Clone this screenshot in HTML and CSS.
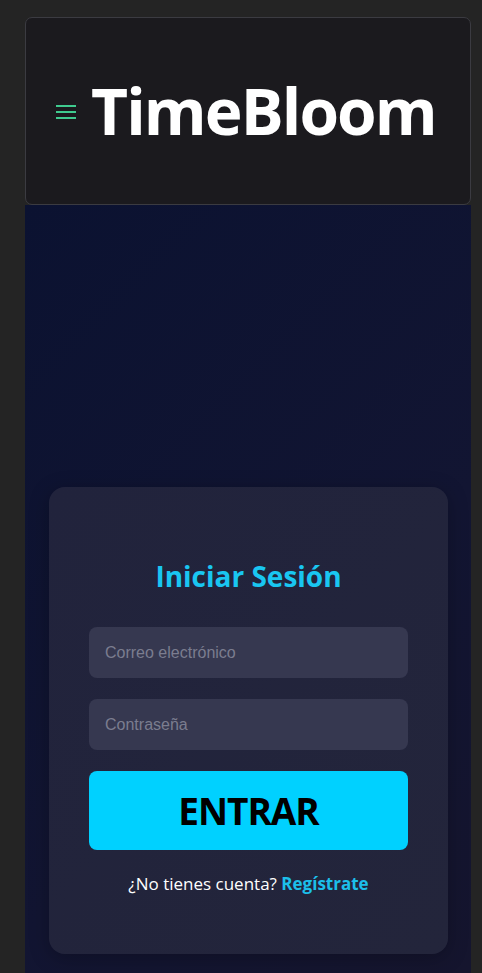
FILE: index.html
```html
<!DOCTYPE html>
<html lang="es">
<head>
<meta charset="utf-8">
<title>TimeBloom</title>
<link rel="stylesheet" href="styles.css">
</head>
<body>
<div class="app">
  <header class="topbar">
    <button class="menu-btn" aria-label="Menú">
      <svg width="20" height="14" viewBox="0 0 20 14"><rect x="0" y="0" width="20" height="2" fill="#3fcb8f"/><rect x="0" y="6" width="20" height="2" fill="#3fcb8f"/><rect x="0" y="12" width="20" height="2" fill="#3fcb8f"/></svg>
    </button>
    <h1 class="brand">TimeBloom</h1>
  </header>
  <main class="main">
    <section class="login-card">
      <h2 class="login-title">Iniciar Sesión</h2>
      <form class="login-form">
        <input class="field" type="email" placeholder="Correo electrónico">
        <input class="field" type="password" placeholder="Contraseña">
        <button class="submit" type="button">ENTRAR</button>
      </form>
      <p class="signup">¿No tienes cuenta? <a href="#">Regístrate</a></p>
    </section>
  </main>
</div>
</body>
</html>
```
FILE: styles.css
```css
html, body {
  margin: 0;
  height: 100%;
}
body {
  background: #242424;
  font-family: "Open Sans", "Noto Sans", sans-serif;
  color: #fff;
  overflow: hidden;
}
.app {
  padding: 17px 11px 0 25px;
  display: flex;
  flex-direction: column;
  height: 100%;
  box-sizing: border-box;
}
.topbar {
  height: 188px;
  box-sizing: border-box;
  background: #1b1a1e;
  border: 1px solid #3b3b41;
  border-radius: 7px;
  display: flex;
  align-items: center;
  padding-left: 30px;
  gap: 15px;
}
.menu-btn {
  background: none;
  border: 0;
  padding: 0;
  display: flex;
  margin-top: 2px;
}
.brand {
  margin: 0;
  font-size: 64px;
  font-weight: 700;
  letter-spacing: -1.9px;
  color: #fff;
  line-height: 1;
}
.main {
  flex: 1;
  background: linear-gradient(135deg, #0b1231 0%, #121532 60%, #15152e 100%);
  padding: 282px 23px 0 24px;
}
.login-card {
  height: 467px;
  box-sizing: border-box;
  background: linear-gradient(135deg, #21233c 0%, #23253b 100%);
  border-radius: 16px;
  padding: 72px 40px 0;
  display: flex;
  flex-direction: column;
  box-shadow: 0 4px 20px rgba(0,0,0,0.25);
}
.login-title {
  margin: 0 0 34px;
  text-align: center;
  font-size: 28px;
  font-weight: 700;
  color: #19c6f1;
  line-height: 34px;
}
.login-form {
  display: flex;
  flex-direction: column;
  gap: 21px;
}
.field {
  height: 51px;
  box-sizing: border-box;
  border: 0;
  border-radius: 8px;
  background: #363850;
  padding: 0 16px;
  font-family: "Liberation Sans", Arial, sans-serif;
  font-size: 16px;
  color: #fff;
  outline: none;
}
.field::placeholder {
  color: #7b7d8f;
}
.submit {
  height: 79px;
  border: 0;
  border-radius: 8px;
  background: #00d1ff;
  color: #000;
  font-family: "Open Sans", "Noto Sans", sans-serif;
  font-weight: 700;
  font-size: 37px;
  letter-spacing: -1px;
  cursor: pointer;
}
.signup {
  margin: 22px 0 0;
  text-align: center;
  font-size: 17px;
  color: #fff;
}
.signup a {
  color: #1cbfea;
  font-weight: 700;
  text-decoration: none;
}
```
